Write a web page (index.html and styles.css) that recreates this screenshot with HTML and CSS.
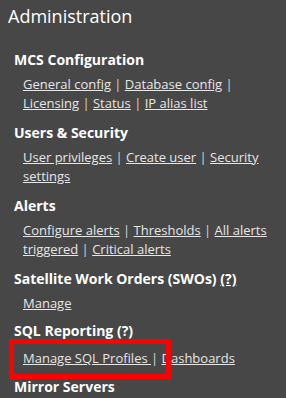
FILE: index.html
```html
<!DOCTYPE html>
<html lang="en">

<head>
    <meta charset="UTF-8">
    <meta name="viewport" content="width=device-width, initial-scale=1.0">
    <title>Administration</title>
    <link rel="stylesheet" href="styles.css">
</head>

<body>
    <div class="panel">
        <h1 class="title">Administration</h1>

        <div class="section">
            <h2 class="caption">MCS Configuration</h2>
            <p class="links">
                <a href="#">General config</a> | <a href="#">Database config</a> |
                <a href="#">Licensing</a> | <a href="#">Status</a> | <a href="#">IP alias list</a>
            </p>
        </div>

        <div class="section">
            <h2 class="caption">Users &amp; Security</h2>
            <p class="links">
                <a href="#">User privileges</a> | <a href="#">Create user</a> | <a href="#">Security settings</a>
            </p>
        </div>

        <div class="section">
            <h2 class="caption">Alerts</h2>
            <p class="links">
                <a href="#">Configure alerts</a> | <a href="#">Thresholds</a> | <a href="#">All alerts triggered</a> |
                <a href="#">Critical alerts</a>
            </p>
        </div>

        <div class="section short">
            <h2 class="caption">Satellite Work Orders (SWOs) <a href="#">(?)</a></h2>
            <p class="links">
                <a href="#">Manage</a>
            </p>
        </div>

        <div class="section">
            <h2 class="caption">SQL Reporting (?)</h2>
            <p class="links marked">
                <span class="highlight"></span>
                <a href="#">Manage SQL Profiles </a>| <a href="#">Dashboards</a>
            </p>
        </div>

        <div class="section">
            <h2 class="caption">Mirror Servers</h2>
        </div>
    </div>
</body>

</html>
```

FILE: styles.css
```css
* {
    margin: 0;
    padding: 0;
    box-sizing: border-box;
}

html {
    background: #474747;
    font-family: 'Open Sans', 'Noto Sans', sans-serif;
}

body {
    overflow: hidden;
}

.panel {
    padding: 2px 8px 0 8px;
    color: #ffffff;
}

.title {
    font-size: 18px;
    font-weight: 400;
    line-height: 28px;
    margin-bottom: 20px;
}

.section {
    padding-left: 6px;
    margin-bottom: 10px;
}

.section.short {
    margin-bottom: 8px;
}

.caption {
    font-size: 14px;
    font-weight: 700;
    line-height: 20px;
    margin-bottom: 5px;
}

.caption a {
    color: #ffffff;
}

.links {
    padding-left: 9px;
    font-size: 13px;
    line-height: 19px;
    color: #d8d8d8;
}

.links a {
    color: #e6e6e6;
}

.marked {
    position: relative;
    margin-top: 8px;
    margin-bottom: -1px;
}

.highlight {
    position: absolute;
    left: -5px;
    top: -10px;
    width: 162px;
    height: 40px;
    border: 5px solid #ff0000;
}
```
